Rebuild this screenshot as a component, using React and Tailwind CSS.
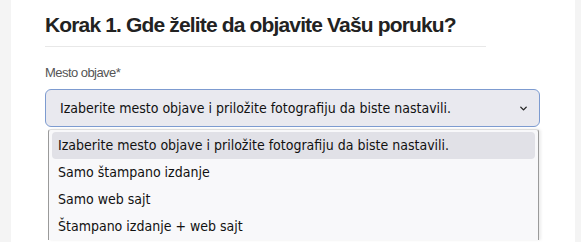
import { ChevronDown } from 'lucide-react';

const options = [
  'Izaberite mesto objave i priložite fotografiju da biste nastavili.',
  'Samo štampano izdanje',
  'Samo web sajt',
  'Štampano izdanje + web sajt',
];

export default function App() {
  return (
    <div className="flex h-[242px] w-[581px] overflow-hidden bg-[#f4f4f4]">
      <div className="w-[11px] shrink-0" />
      <div className="w-[564px] shrink-0 bg-white pl-[34px] pt-[12px]">
        {/* Heading */}
        <h2 className="font-['Liberation_Sans',Arial,sans-serif] text-[21px] font-bold leading-[25px] tracking-[-0.85px] text-[#222]">
          Korak 1. Gde želite da objavite Vašu poruku?
        </h2>
        <div className="mt-[9px] h-px w-[441px] bg-[#e8e8e8]" />

        {/* Field */}
        <div className="mt-[18px] font-['Liberation_Sans',Arial,sans-serif] text-[13px] leading-[16px] tracking-[-0.55px] text-[#555]">
          Mesto objave*
        </div>
        <div className="mt-[8px] flex h-[38px] w-[495px] items-center justify-between rounded-[6px] border border-[#7d9bd0] bg-[#e9e9ef] pl-[14px] pr-[10px] font-['DejaVu_Sans_Condensed','DejaVu_Sans',sans-serif] text-[14px] text-[#111]">
          <span className="whitespace-nowrap">{options[0]}</span>
          <ChevronDown size={11} strokeWidth={3} className="shrink-0 text-[#222]" />
        </div>

        {/* Open list */}
        <div className="ml-[3px] mt-[2px] w-[491px] rounded-t-[3px] border-x border-t border-x-[#9a9a9a] border-t-[#dcdcdc] bg-[#f8f8fa] px-[3px] pt-[2px] font-['DejaVu_Sans_Condensed','DejaVu_Sans',sans-serif] text-[14px] text-[#111] shadow-[2px_0_3px_rgba(0,0,0,0.08)]">
          {options.map((o, i) => (
            <div
              key={o}
              className={`flex h-[27px] items-center whitespace-nowrap rounded-[4px] pl-[6px] ${i === 0 ? 'bg-[#e1e1e7]' : ''}`}
            >
              {o}
            </div>
          ))}
        </div>
      </div>
    </div>
  );
}
